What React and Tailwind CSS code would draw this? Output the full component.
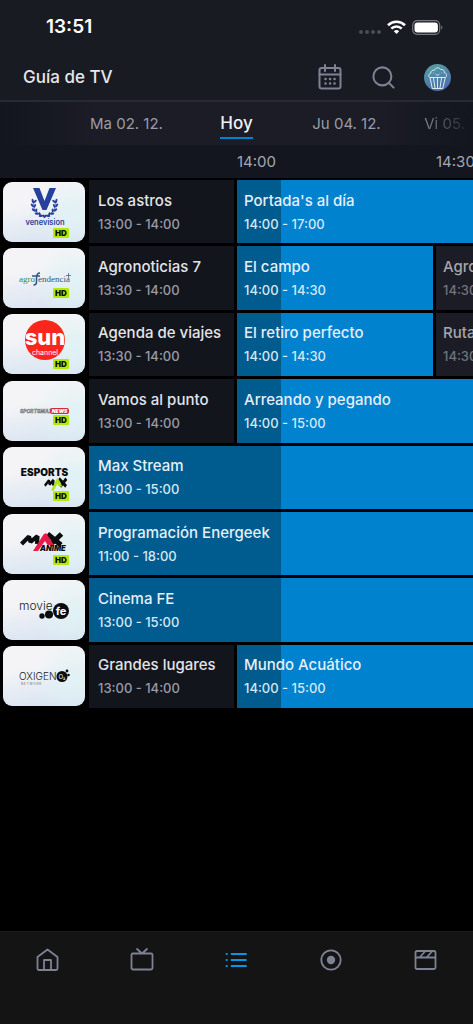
import { Search } from 'lucide-react';

const days = [
  { id: 'ma', label: 'Ma 02. 12.' },
  { id: 'hoy', label: 'Hoy', active: true },
  { id: 'ju', label: 'Ju 04. 12.' },
  { id: 'vi', label: 'Vi 05. 12.' },
];

/* Channel logos, drawn on an 82x60 tile */
const HdBadge = ({ y }) => (
  <g>
    <rect x="50" y={y} width="16" height="10" rx="1" fill="#b5e80a" />
    <text x="58" y={y + 8} textAnchor="middle" fontSize="8" fontWeight="900" fill="#0b0d05">HD</text>
  </g>
);

const leaves = [
  [-13, 0, 10], [-13.5, 5, -10], [-12, 10, -30], [-8.5, 14, -55], [-4, 16.5, -75],
];

const Venevision = () => (
  <>
    <path d="M30 6h6.500l5 13 5-13h6.500L43.500 28h-4z" fill="#27409b" />
    <g transform="translate(41.5 19) scale(.9 .9)" fill="#27409b">
      {leaves.map(([x, y, r]) => (
        <g key={y}>
          <ellipse cx={x} cy={y} rx="1.200" ry="2.500" transform={`rotate(${r - 25} ${x} ${y})`} />
          <ellipse cx={x + 3} cy={y + 0.5} rx="1.100" ry="2.200" transform={`rotate(${r + 35} ${x + 3} ${y})`} />
          <ellipse cx={-x} cy={y} rx="1.200" ry="2.500" transform={`rotate(${25 - r} ${-x} ${y})`} />
          <ellipse cx={-x - 3} cy={y + 0.5} rx="1.100" ry="2.200" transform={`rotate(${-35 - r} ${-x - 3} ${y})`} />
        </g>
      ))}
      <path d="M-12 0C-13 10-7 16 0 17C7 16 13 10 12 0" fill="none" stroke="#27409b" strokeWidth=".7" />
    </g>
    <text x="42" y="43" textAnchor="middle" fontSize="7.500" fontWeight="600" fill="#27409b">venevision</text>
    <HdBadge y={46} />
  </>
);

const Agrotendencia = () => (
  <>
    <g fontFamily="Liberation Serif, serif" fontSize="9">
      <text x="16" y="34" fill="#2d8a4c">agro</text>
      <text x="35" y="34" fill="#31567f">endencia</text>
    </g>
    <path d="M37 25c-2 0-3.500 2-3.500 5v4c0 2-1 3-3 3M29 28h8" fill="none" stroke="#31567f" strokeWidth="1.500" />
    <path d="M65.500 25v5M63 27.500h5" stroke="#31567f" strokeWidth=".7" />
    <HdBadge y={40} />
  </>
);

const Sun = () => (
  <>
    <clipPath id="sun-disc"><circle cx="42" cy="26" r="20" /></clipPath>
    <circle cx="42" cy="26" r="20" fill="#f9261b" />
    <g clipPath="url(#sun-disc)" fill="#fff" textAnchor="middle">
      <text x="42" y="31" fontSize="22" fontWeight="800">sun</text>
      <text x="42" y="41" fontSize="7">channel</text>
    </g>
    <HdBadge y={45} />
  </>
);

const SportsmaxNews = () => (
  <>
    <text x="17" y="32" fontSize="5" fontStyle="italic" fontWeight="700" fill="#eee" stroke="#555b66" strokeWidth=".4">SPORTSMAX</text>
    <rect x="47" y="27" width="19" height="6" rx="2" fill="#d22c3c" />
    <text x="56.500" y="32" textAnchor="middle" fontSize="5" fontStyle="italic" fontWeight="900" fill="#fff">NEWS</text>
    <HdBadge y={34} />
  </>
);

const MaxMark = ({ accent }) => (
  <>
    <path d="M1.500 11L9 3.500 10.500 9 17.500 3 17 11" fill="none" stroke="#0b0c0e" strokeWidth="4.200" strokeLinejoin="bevel" />
    <path d="M27.500 1L41 12M41.500 1L30 12" fill="none" stroke="#0b0c0e" strokeWidth="5" />
    <path d="M13 18L23.500 1.500 26 0l8 12h-6.500l-2.500-4-7 10z" fill={accent} />
  </>
);

const EsportsMax = () => (
  <>
    <text x="41.500" y="29" textAnchor="middle" fontSize="10" fontWeight="900" fill="#0b0c0e">ESPORTS</text>
    <g transform="translate(41 31) scale(.54 .7)">
      <MaxMark accent="#a7e614" />
    </g>
    <HdBadge y={44} />
  </>
);

const MaxAnime = () => (
  <>
    <g transform="translate(17 19)">
      <MaxMark accent="#e81c48" />
    </g>
    <text x="37" y="37" fontSize="7.500" fontStyle="italic" fontWeight="900" fill="#0b0c0e">ANIME</text>
    <HdBadge y={41} />
  </>
);

const MovieFe = () => (
  <>
    <text x="16" y="30" fontSize="12" fontWeight="300" fill="#222">movie</text>
    <g fill="#0b0c0e">
      <circle cx="58" cy="31" r="8" />
      <circle cx="46" cy="34.500" r="4" />
      <circle cx="39" cy="36" r="2.700" />
    </g>
    <text x="58" y="35" textAnchor="middle" fontSize="11" fontWeight="700" fill="#fff">fe</text>
  </>
);

const Oxigeno = () => (
  <>
    <text x="16" y="34" fontSize="10" fontWeight="300" fill="#222">OXIGEN</text>
    <text x="18" y="39" fontSize="3" fill="#666">N  E  T  W  O  R  K</text>
    <circle cx="59" cy="30.500" r="5.500" fill="#0b0c0e" />
    <circle cx="64" cy="25" r="1.400" fill="#0b0c0e" />
    <circle cx="65.500" cy="29" r="1.300" fill="#0b0c0e" />
    <text x="59" y="33" textAnchor="middle" fontSize="6" fill="#fff">O₂</text>
  </>
);

const channels = [
  {
    name: 'Venevision',
    Logo: Venevision,
    shows: [
      { title: 'Los astros', time: '13:00 - 14:00', kind: 'past' },
      { title: "Portada's al día", time: '14:00 - 17:00', kind: 'live' },
    ],
  },
  {
    name: 'Agrotendencia',
    Logo: Agrotendencia,
    shows: [
      { title: 'Agronoticias 7', time: '13:30 - 14:00', kind: 'past' },
      { title: 'El campo', time: '14:00 - 14:30', kind: 'liveHalf' },
      { title: 'Agronoticias', time: '14:30 - 15:00', kind: 'next' },
    ],
  },
  {
    name: 'Sun Channel',
    Logo: Sun,
    shows: [
      { title: 'Agenda de viajes', time: '13:30 - 14:00', kind: 'past' },
      { title: 'El retiro perfecto', time: '14:00 - 14:30', kind: 'liveHalf' },
      { title: 'Rutas', time: '14:30 - 15:00', kind: 'next' },
    ],
  },
  {
    name: 'Sportsmax News',
    Logo: SportsmaxNews,
    shows: [
      { title: 'Vamos al punto', time: '13:00 - 14:00', kind: 'past' },
      { title: 'Arreando y pegando', time: '14:00 - 15:00', kind: 'live' },
    ],
  },
  {
    name: 'Esports Max',
    Logo: EsportsMax,
    shows: [{ title: 'Max Stream', time: '13:00 - 15:00', kind: 'liveWide' }],
  },
  {
    name: 'Max Anime',
    Logo: MaxAnime,
    shows: [{ title: 'Programación Energeek', time: '11:00 - 18:00', kind: 'liveWide' }],
  },
  {
    name: 'Movie Fe',
    Logo: MovieFe,
    shows: [{ title: 'Cinema FE', time: '13:00 - 15:00', kind: 'liveWide' }],
  },
  {
    name: 'Oxigeno Network',
    Logo: Oxigeno,
    shows: [
      { title: 'Grandes lugares', time: '13:00 - 14:00', kind: 'past' },
      { title: 'Mundo Acuático', time: '14:00 - 15:00', kind: 'live' },
    ],
  },
];

// the darker part of a live cell is the time already played
const cellStyles = {
  past: 'w-[145px] shrink-0 pl-[9px] bg-[#12151b] text-[#e3e4e7]',
  live: 'flex-1 pl-[7px] bg-[linear-gradient(to_right,#005b8f_44px,#0082ce_44px)] text-[#e4eff8]',
  liveHalf: 'w-[196px] shrink-0 pl-[7px] bg-[linear-gradient(to_right,#005b8f_44px,#0082ce_44px)] text-[#e4eff8]',
  liveWide: 'flex-1 pl-[9px] bg-[linear-gradient(to_right,#005b8f_192px,#0082ce_192px)] text-[#e4eff8]',
  next: 'flex-1 min-w-0 pl-[7px] bg-[#1b1c26] text-[#a5a6ae]',
};

const timeStyles = {
  past: 'text-[#9a9ba8]',
  live: 'text-[#d5e7f5]',
  liveHalf: 'text-[#d5e7f5]',
  liveWide: 'text-[#d5e7f5]',
  next: 'text-[#72737e]',
};

const navItems = [
  {
    label: 'Inicio',
    icon: <path d="M2.500 9L12.500 1.500 22.500 9v11.500a1.500 1.500 0 0 1-1.500 1.500H4a1.500 1.500 0 0 1-1.500-1.500zM9 22V12h7v10" />,
  },
  {
    label: 'TV en vivo',
    icon: <path d="M3 5.500h18a1.500 1.500 0 0 1 1.500 1.500v13a1.500 1.500 0 0 1-1.500 1.500H3A1.500 1.500 0 0 1 1.500 20V7A1.500 1.500 0 0 1 3 5.500zM7 1l5 4.500L17 1" />,
  },
  {
    label: 'Guía',
    active: true,
    icon: <path d="M2.500 6h.5M2.500 12h.5M2.500 18h.5M7.500 6h14.500M7.500 12h14.500M7.500 18h14.500" />,
  },
  {
    label: 'Grabaciones',
    icon: (
      <>
        <circle cx="12" cy="12" r="9.700" />
        <circle cx="12" cy="12" r="4.200" fill="currentColor" stroke="none" />
      </>
    ),
  },
  {
    label: 'Películas',
    icon: <path d="M3 3h17A1.500 1.500 0 0 1 21.500 4.500v15a1.500 1.500 0 0 1-1.500 1.500H3A1.500 1.500 0 0 1 1.500 19.500v-15A1.500 1.500 0 0 1 3 3zM1.500 9.500h20M6 9l5-5.500M13 9l5-5.500" />,
  },
];

const StatusBar = () => (
  <div className="flex h-[54px] items-center justify-between pl-[46px] pr-[30px] text-white">
    <span className="text-[19px] font-semibold leading-6">13:51</span>
    <div className="flex items-center gap-[6px]">
      <svg className="mt-[10px] h-1 w-[22px]" viewBox="0 0 22 4" fill="#4b4d54">
        <circle cx="2" cy="2" r="2" />
        <circle cx="8" cy="2" r="2" />
        <circle cx="14" cy="2" r="2" />
        <circle cx="20" cy="2" r="2" />
      </svg>
      <svg className="h-[14px] w-[19px]" viewBox="0 0 19 14" fill="none" stroke="currentColor" strokeWidth="2.600">
        <path d="M1 5.200a12.200 12.200 0 0 1 17 0" />
        <path d="M4.300 8.600a7.400 7.400 0 0 1 10.400 0" />
        <path d="M9.500 14L6.800 11.200a4 4 0 0 1 5.400 0z" fill="currentColor" stroke="none" />
      </svg>
      <svg className="h-[15px] w-[31px]" viewBox="0 0 31 15">
        <rect x=".7" y=".7" width="27" height="13.600" rx="4.500" fill="none" stroke="#777980" strokeWidth="1.200" />
        <rect x="2.500" y="2.500" width="23.400" height="10" rx="3" fill="#fff" />
        <path d="M29.200 5.500c1.600.8 1.600 3.200 0 4z" fill="#777980" />
      </svg>
    </div>
  </div>
);

const PopcornAvatar = () => (
  <svg className="size-[27px]" viewBox="0 0 27 27" fill="none" stroke="#dcebf0" strokeWidth="1" strokeLinejoin="round">
    <defs>
      <linearGradient id="avatar" x1="0" y1="0" x2=".4" y2="1">
        <stop offset="0" stopColor="#55a39f" />
        <stop offset="1" stopColor="#4c6fae" />
      </linearGradient>
    </defs>
    <circle cx="13.500" cy="13.500" r="13.500" fill="url(#avatar)" stroke="none" />
    <path d="M6 13.500c-2-1-1.500-4 .8-4.200C6.500 6.800 9 5.500 10.500 6.300c.5-2.800 5-3.300 6.200-.8 2-.6 4 .8 3.600 3.300 2.700.3 3 3.600 1 4.700z" />
    <path d="M6 13.500l2.300 11h10.400l2.600-11M9.500 14l1.500 10M13.500 14v10M17.500 14l-1.500 10" />
    <path d="M11.500 10c.8 1.400 3.200 1.400 4 0M9.500 9h.5M17 9h.5" />
  </svg>
);

const App = () => {
  return (
    <div className="flex min-h-screen flex-col overflow-hidden bg-black font-['Inter','Liberation_Sans',sans-serif]">
      {/* Header */}
      <header className="border-b-2 border-[#282a33] bg-[#191b23]">
        <StatusBar />
        <div className="flex h-[46px] items-center justify-between pl-[23px] pr-[22px]">
          <h1 className="text-[17px] font-medium leading-6 text-[#e6e7ea]">Guía de TV</h1>
          <div className="flex items-center gap-[27px] text-[#7d8295]">
            <button type="button" aria-label="Calendario">
              <svg className="size-[26px]" viewBox="0 0 26 26" fill="none" stroke="currentColor" strokeWidth="2" strokeLinecap="round">
                <rect x="2.500" y="4" width="21" height="20.500" rx="2" />
                <path d="M2.500 10.500h21M8 1v6M18 1v6" />
                <path d="M8.500 15h.1M13 15h.1M17.500 15h.1M8.500 19.500h.1M13 19.500h.1M17.500 19.500h.1" strokeWidth="2.500" />
              </svg>
            </button>
            <button type="button" aria-label="Buscar">
              <Search className="size-[27px]" strokeWidth={1.8} />
            </button>
            <button type="button" aria-label="Perfil">
              <PopcornAvatar />
            </button>
          </div>
        </div>
      </header>

      {/* Day picker */}
      <nav className="flex h-[43px] justify-center overflow-hidden bg-[linear-gradient(to_right,#13161e,#1b1c26_20%,#1b1c26_80%,#13161e)] pl-[110px]">
        {days.map((day) => (
          <button
            key={day.id}
            type="button"
            className={`flex w-[110px] shrink-0 items-center justify-center ${
              day.active ? 'text-[17px] font-medium text-[#f0f1f3]' : 'text-[15px] text-[#9a9ca8]'
            } ${
              day.id === 'vi'
                ? 'bg-[linear-gradient(to_right,#9a9ca8_10%,#13161e_65%)] bg-clip-text text-transparent'
                : ''
            }`}
          >
            <span className={day.active ? 'mt-[3px] border-b-2 border-[#0082ce] pb-[2px] leading-6' : 'leading-6'}>
              {day.label}
            </span>
          </button>
        ))}
      </nav>

      {/* Time scale */}
      <div className="flex h-[33px] shrink-0 items-center bg-[#13161e] pl-[237px] pt-[2px] text-[15px] text-[#a5a7b2]">
        <span className="w-[199px] shrink-0">14:00</span>
        <span className="shrink-0">14:30</span>
      </div>

      {/* Guide */}
      <main className="mt-[2px] grid min-h-[528px] auto-rows-fr gap-[3px]">
        {channels.map(({ name, Logo, shows }) => (
          <section key={name} aria-label={name} className="flex min-w-0 gap-[3px]">
            <div className="flex w-[86px] shrink-0 items-center pl-[3px]">
              <svg
                className="h-[60px] w-[82px] rounded-[9px] bg-[radial-gradient(circle_at_85%_55%,#e0f2f5,transparent_50%),linear-gradient(170deg,#f4f4f6_35%,#d5e2f1)]"
                viewBox="0 0 82 60"
              >
                <Logo />
              </svg>
            </div>
            {shows.map((show) => (
              <article key={show.time} className={`flex flex-col justify-center overflow-hidden whitespace-nowrap ${cellStyles[show.kind]}`}>
                <h2 className="text-[15px] font-medium leading-6">{show.title}</h2>
                <p className={`text-[13px] font-medium leading-[22px] ${timeStyles[show.kind]}`}>{show.time}</p>
              </article>
            ))}
          </section>
        ))}
      </main>

      {/* Bottom navigation */}
      <nav className="mt-auto grid h-[93px] shrink-0 grid-cols-5 border-t border-[#1c1c1c] bg-[#141414]">
        {navItems.map((item) => (
          <a
            key={item.label}
            href="#"
            aria-label={item.label}
            className={`flex justify-center pt-4 ${item.active ? 'text-[#0a95e8]' : 'text-[#7d8295]'}`}
          >
            <svg className="size-6" viewBox="0 0 24 24" fill="none" stroke="currentColor" strokeWidth="1.800" strokeLinejoin="round" strokeLinecap="round">
              {item.icon}
            </svg>
          </a>
        ))}
      </nav>
    </div>
  );
};

export default App;
